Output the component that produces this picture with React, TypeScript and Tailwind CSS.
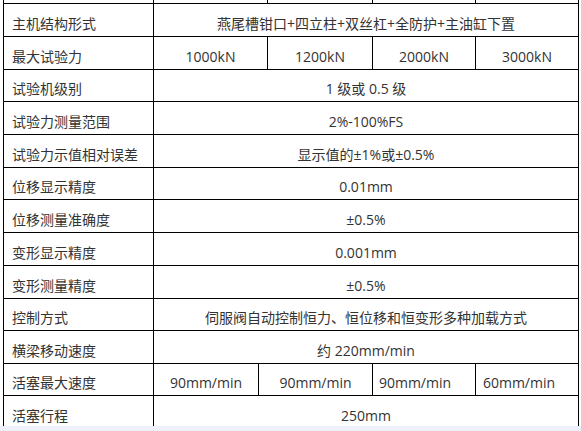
import React from 'react';

type Cell = { text: string; w: number; shift?: string };

type Row = {
  label: string;
  h: string;
  cells: Cell[];
};

const SPAN = 425;

// 4-column split of the max-force row and the piston-speed row
const rows: Row[] = [
  { label: '主机结构形式', h: 'h-[33px]', cells: [{ text: '燕尾槽钳口+四立柱+双丝杠+全防护+主油缸下置', w: SPAN }] },
  {
    label: '最大试验力',
    h: 'h-[33px]',
    cells: [
      { text: '1000kN', w: 114 },
      { text: '1200kN', w: 105 },
      { text: '2000kN', w: 103 },
      { text: '3000kN', w: 103 },
    ],
  },
  { label: '试验机级别', h: 'h-[32px]', cells: [{ text: '1 级或 0.5 级', w: SPAN }] },
  { label: '试验力测量范围', h: 'h-[33px]', cells: [{ text: '2%-100%FS', w: SPAN }] },
  { label: '试验力示值相对误差', h: 'h-[33px]', cells: [{ text: '显示值的±1%或±0.5%', w: SPAN }] },
  { label: '位移显示精度', h: 'h-[32px]', cells: [{ text: '0.01mm', w: SPAN }] },
  { label: '位移测量准确度', h: 'h-[33px]', cells: [{ text: '±0.5%', w: SPAN }] },
  { label: '变形显示精度', h: 'h-[33px]', cells: [{ text: '0.001mm', w: SPAN }] },
  { label: '变形测量精度', h: 'h-[33px]', cells: [{ text: '±0.5%', w: SPAN }] },
  { label: '控制方式', h: 'h-[32px]', cells: [{ text: '伺服阀自动控制恒力、恒位移和恒变形多种加载方式', w: SPAN }] },
  { label: '横梁移动速度', h: 'h-[33px]', cells: [{ text: '约 220mm/min', w: SPAN }] },
  {
    label: '活塞最大速度',
    h: 'h-[32px]',
    cells: [
      { text: '90mm/min', w: 105 },
      { text: '90mm/min', w: 114 },
      { text: '90mm/min', w: 103, shift: 'pr-[18px]' },
      { text: '60mm/min', w: 103, shift: 'pr-[16px]' },
    ],
  },
  { label: '活塞行程', h: 'h-[33px]', cells: [{ text: '250mm', w: SPAN }] },
];

const TableRow: React.FC<{ row: Row }> = ({ row }) => (
  <div className={`flex shrink-0 border-b border-black ${row.h}`}>
    <div className="flex w-[150px] shrink-0 items-end border-r border-black pb-[2px] pl-[8px] leading-[20px]">
      {row.label}
    </div>
    {row.cells.map((c, i) => (
      <div
        key={i}
        className={`flex shrink-0 items-end justify-center border-r border-black pb-[2px] leading-[20px] whitespace-nowrap ${c.shift ?? ''}`}
        style={{ width: c.w }}
      >
        {c.text}
      </div>
    ))}
  </div>
);

export default function App() {
  return (
    <div
      className="flex h-[431px] w-[581px] flex-col overflow-hidden bg-white text-[14px] text-[#333]"
      style={{ fontFamily: '"Open Sans", "Noto Sans CJK SC", sans-serif' }}
    >
      <div className="flex h-[426px] flex-col overflow-hidden pl-[3px]">
        <div className="flex w-[576px] flex-col border-l border-black">
          {/* tail of the row above, scrolled out of view */}
          <div className="flex h-[4px] shrink-0 border-b border-black">
            <div className="w-[150px] shrink-0 border-r border-black" />
            <div className="w-[114px] shrink-0 border-r border-black" />
            <div className="w-[105px] shrink-0 border-r border-black" />
            <div className="w-[103px] shrink-0 border-r border-black" />
            <div className="w-[103px] shrink-0 border-r border-black" />
          </div>
          {rows.map((r) => (
            <TableRow key={r.label} row={r} />
          ))}
        </div>
      </div>
      <div className="h-[5px] bg-[#eef2f8]" />
    </div>
  );
}
